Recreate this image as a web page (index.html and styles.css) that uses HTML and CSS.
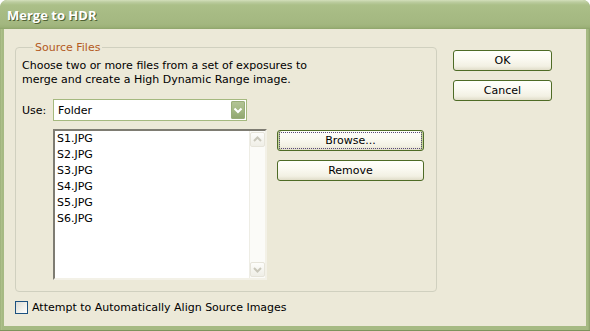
FILE: index.html
```html
<!DOCTYPE html>
<html>
<head>
<meta charset="utf-8">
<link rel="stylesheet" href="styles.css">
</head>
<body>
<div class="window">
  <div class="titlebar"><span class="title">Merge to HDR</span></div>
  <div class="client">
    <div class="main">
      <fieldset class="group">
        <legend>Source Files</legend>
        <p class="desc">Choose two or more files from a set of exposures to<br>merge and create a High Dynamic Range image.</p>
        <div class="use-row">
          <span class="use-label">Use:</span>
          <div class="select">
            <span class="select-value">Folder</span>
            <span class="dd"><svg width="14" height="18" viewBox="0 0 14 18"><path d="M3.5 7.5 L7 11 L10.5 7.5" fill="none" stroke="#fff" stroke-width="2"/></svg></span>
          </div>
        </div>
        <div class="files-row">
          <div class="listbox">
            <ul class="items">
              <li>S1.JPG</li>
              <li>S2.JPG</li>
              <li>S3.JPG</li>
              <li>S4.JPG</li>
              <li>S5.JPG</li>
              <li>S6.JPG</li>
            </ul>
            <div class="scrollbar">
              <span class="sb-btn"><svg width="15" height="15" viewBox="0 0 15 15"><path d="M4 9 L7.5 5.5 L11 9" fill="none" stroke="#c9c7ba" stroke-width="2"/></svg></span>
              <span class="sb-btn"><svg width="15" height="15" viewBox="0 0 15 15"><path d="M4 6 L7.5 9.5 L11 6" fill="none" stroke="#c9c7ba" stroke-width="2"/></svg></span>
            </div>
          </div>
          <div class="file-buttons">
            <button class="btn default"><span class="focus">Browse...</span></button>
            <button class="btn">Remove</button>
          </div>
        </div>
      </fieldset>
      <label class="check"><span class="box"></span>Attempt to Automatically Align Source Images</label>
    </div>
    <div class="side">
      <button class="btn side-btn">OK</button>
      <button class="btn side-btn">Cancel</button>
    </div>
  </div>
</div>
</body>
</html>
```

FILE: styles.css
```css
html, body {
  margin: 0;
  padding: 0;
  background: #ffffff;
}

.window {
  width: 590px;
  height: 331px;
  box-sizing: border-box;
  display: flex;
  flex-direction: column;
  background: linear-gradient(90deg, #8fa46e 0, #b4c590 1px, #a6ba83 2px, #a6ba83 calc(100% - 2px), #8a9f69 100%);
  border-radius: 7px 7px 0 0;
  padding: 0 4px 4px 4px;
  border-bottom: 1px solid #7d935c;
  font-family: "DejaVu Sans", "Liberation Sans", sans-serif;
  font-size: 11px;
  color: #000;
  overflow: hidden;
}

.titlebar {
  height: 29px;
  margin: 0 -4px;
  padding: 0 7px;
  box-sizing: border-box;
  display: flex;
  align-items: center;
  border-radius: 7px 7px 0 0;
  background: linear-gradient(180deg, #d3dfbb 0, #bccda0 2px, #abbf88 5px, #a7bb84 14px, #a3b780 24px, #9cb178 27px, #8ea46b 29px);
}

.title {
  font-family: "Open Sans", "Liberation Sans", sans-serif;
  font-weight: bold;
  font-size: 13px;
  color: #ffffff;
  text-shadow: 1px 1px 0 #4f6134;
  margin-top: 0;
}

.client {
  flex: 1;
  display: flex;
  background: #ece9d8;
  padding-left: 11px;
  padding-top: 12px;
}

.main {
  display: flex;
  flex-direction: column;
  width: 422px;
}

.group {
  margin: 0;
  padding: 5px 6px 11px 6px;
  border: 1px solid #d0d0bf;
  border-radius: 4px;
  min-width: 0;
}

.group legend {
  margin-left: 11px;
  padding: 0 2px;
  line-height: 13px;
  color: #b35a22;
}

.desc {
  margin: 0;
  line-height: 14px;
}

.use-row {
  display: flex;
  align-items: center;
  margin-top: 12px;
}

.use-label {
  width: 31px;
}

.select {
  width: 194px;
  height: 22px;
  box-sizing: border-box;
  border: 1px solid #a5b97f;
  background: #fff;
  display: flex;
  align-items: center;
  justify-content: space-between;
  padding: 0 1px 0 4px;
}

.dd {
  width: 14px;
  height: 18px;
  border-radius: 2px;
  background: linear-gradient(180deg, #b4c597 0, #a3b884 50%, #8fa56d 100%);
  box-shadow: inset 0 0 0 1px #98ad78;
  display: flex;
}

.files-row {
  display: flex;
  margin-top: 8px;
  margin-left: 31px;
}

.listbox {
  width: 214px;
  height: 151px;
  box-sizing: border-box;
  border-style: solid;
  border-width: 2px;
  border-color: #7e7c72 #f3f1e7 #f3f1e7 #7e7c72;
  background: #fff;
  display: flex;
  justify-content: space-between;
}

.items {
  list-style: none;
  margin: 0;
  padding: 0 0 0 2px;
  line-height: 16px;
}

.scrollbar {
  width: 16px;
  display: flex;
  flex-direction: column;
  justify-content: space-between;
  background: #fbfbf8;
  border-left: 1px solid #eeede5;
  box-sizing: border-box;
  padding: 1px 0 1px 0;
}

.sb-btn {
  width: 15px;
  height: 15px;
  box-sizing: border-box;
  border: 1px solid #e6e4da;
  border-radius: 2px;
  background: linear-gradient(180deg, #fdfdfb, #efeee6);
  display: flex;
}

.sb-btn svg {
  margin: -1px;
}

.file-buttons {
  display: flex;
  flex-direction: column;
  gap: 9px;
  margin-left: 10px;
  margin-top: 1px;
}

.btn {
  width: 147px;
  height: 21px;
  box-sizing: border-box;
  border: 1px solid #4e6b26;
  border-radius: 3px;
  background: linear-gradient(180deg, #fffffb 0, #fbfaf2 40%, #f2f0e3 80%, #e1ddc9 100%);
  font: inherit;
  color: #000;
  padding: 0;
  display: flex;
  align-items: center;
  justify-content: center;
}

.btn.default {
  box-shadow: inset 1px 0 0 #c2d19d, inset -1px 0 0 #c2d19d, inset 2px 0 0 #b1c385, inset -2px 0 0 #b1c385;
}

.focus {
  flex: 1;
  align-self: stretch;
  margin: 2px 2px;
  outline: 1px dotted #5a4a7a;
  display: flex;
  align-items: center;
  justify-content: center;
}

.check {
  display: flex;
  align-items: center;
  margin-top: 9px;
  gap: 4px;
  height: 13px;
}

.box {
  width: 13px;
  height: 13px;
  box-sizing: border-box;
  border: 1px solid #1c5180;
  background: linear-gradient(135deg, #dcdcd5 0, #eeeee8 50%, #ffffff 100%);
}

.side {
  display: flex;
  flex-direction: column;
  gap: 9px;
  margin-left: 16px;
  padding-top: 9px;
}

.side-btn {
  width: 99px;
}
```
